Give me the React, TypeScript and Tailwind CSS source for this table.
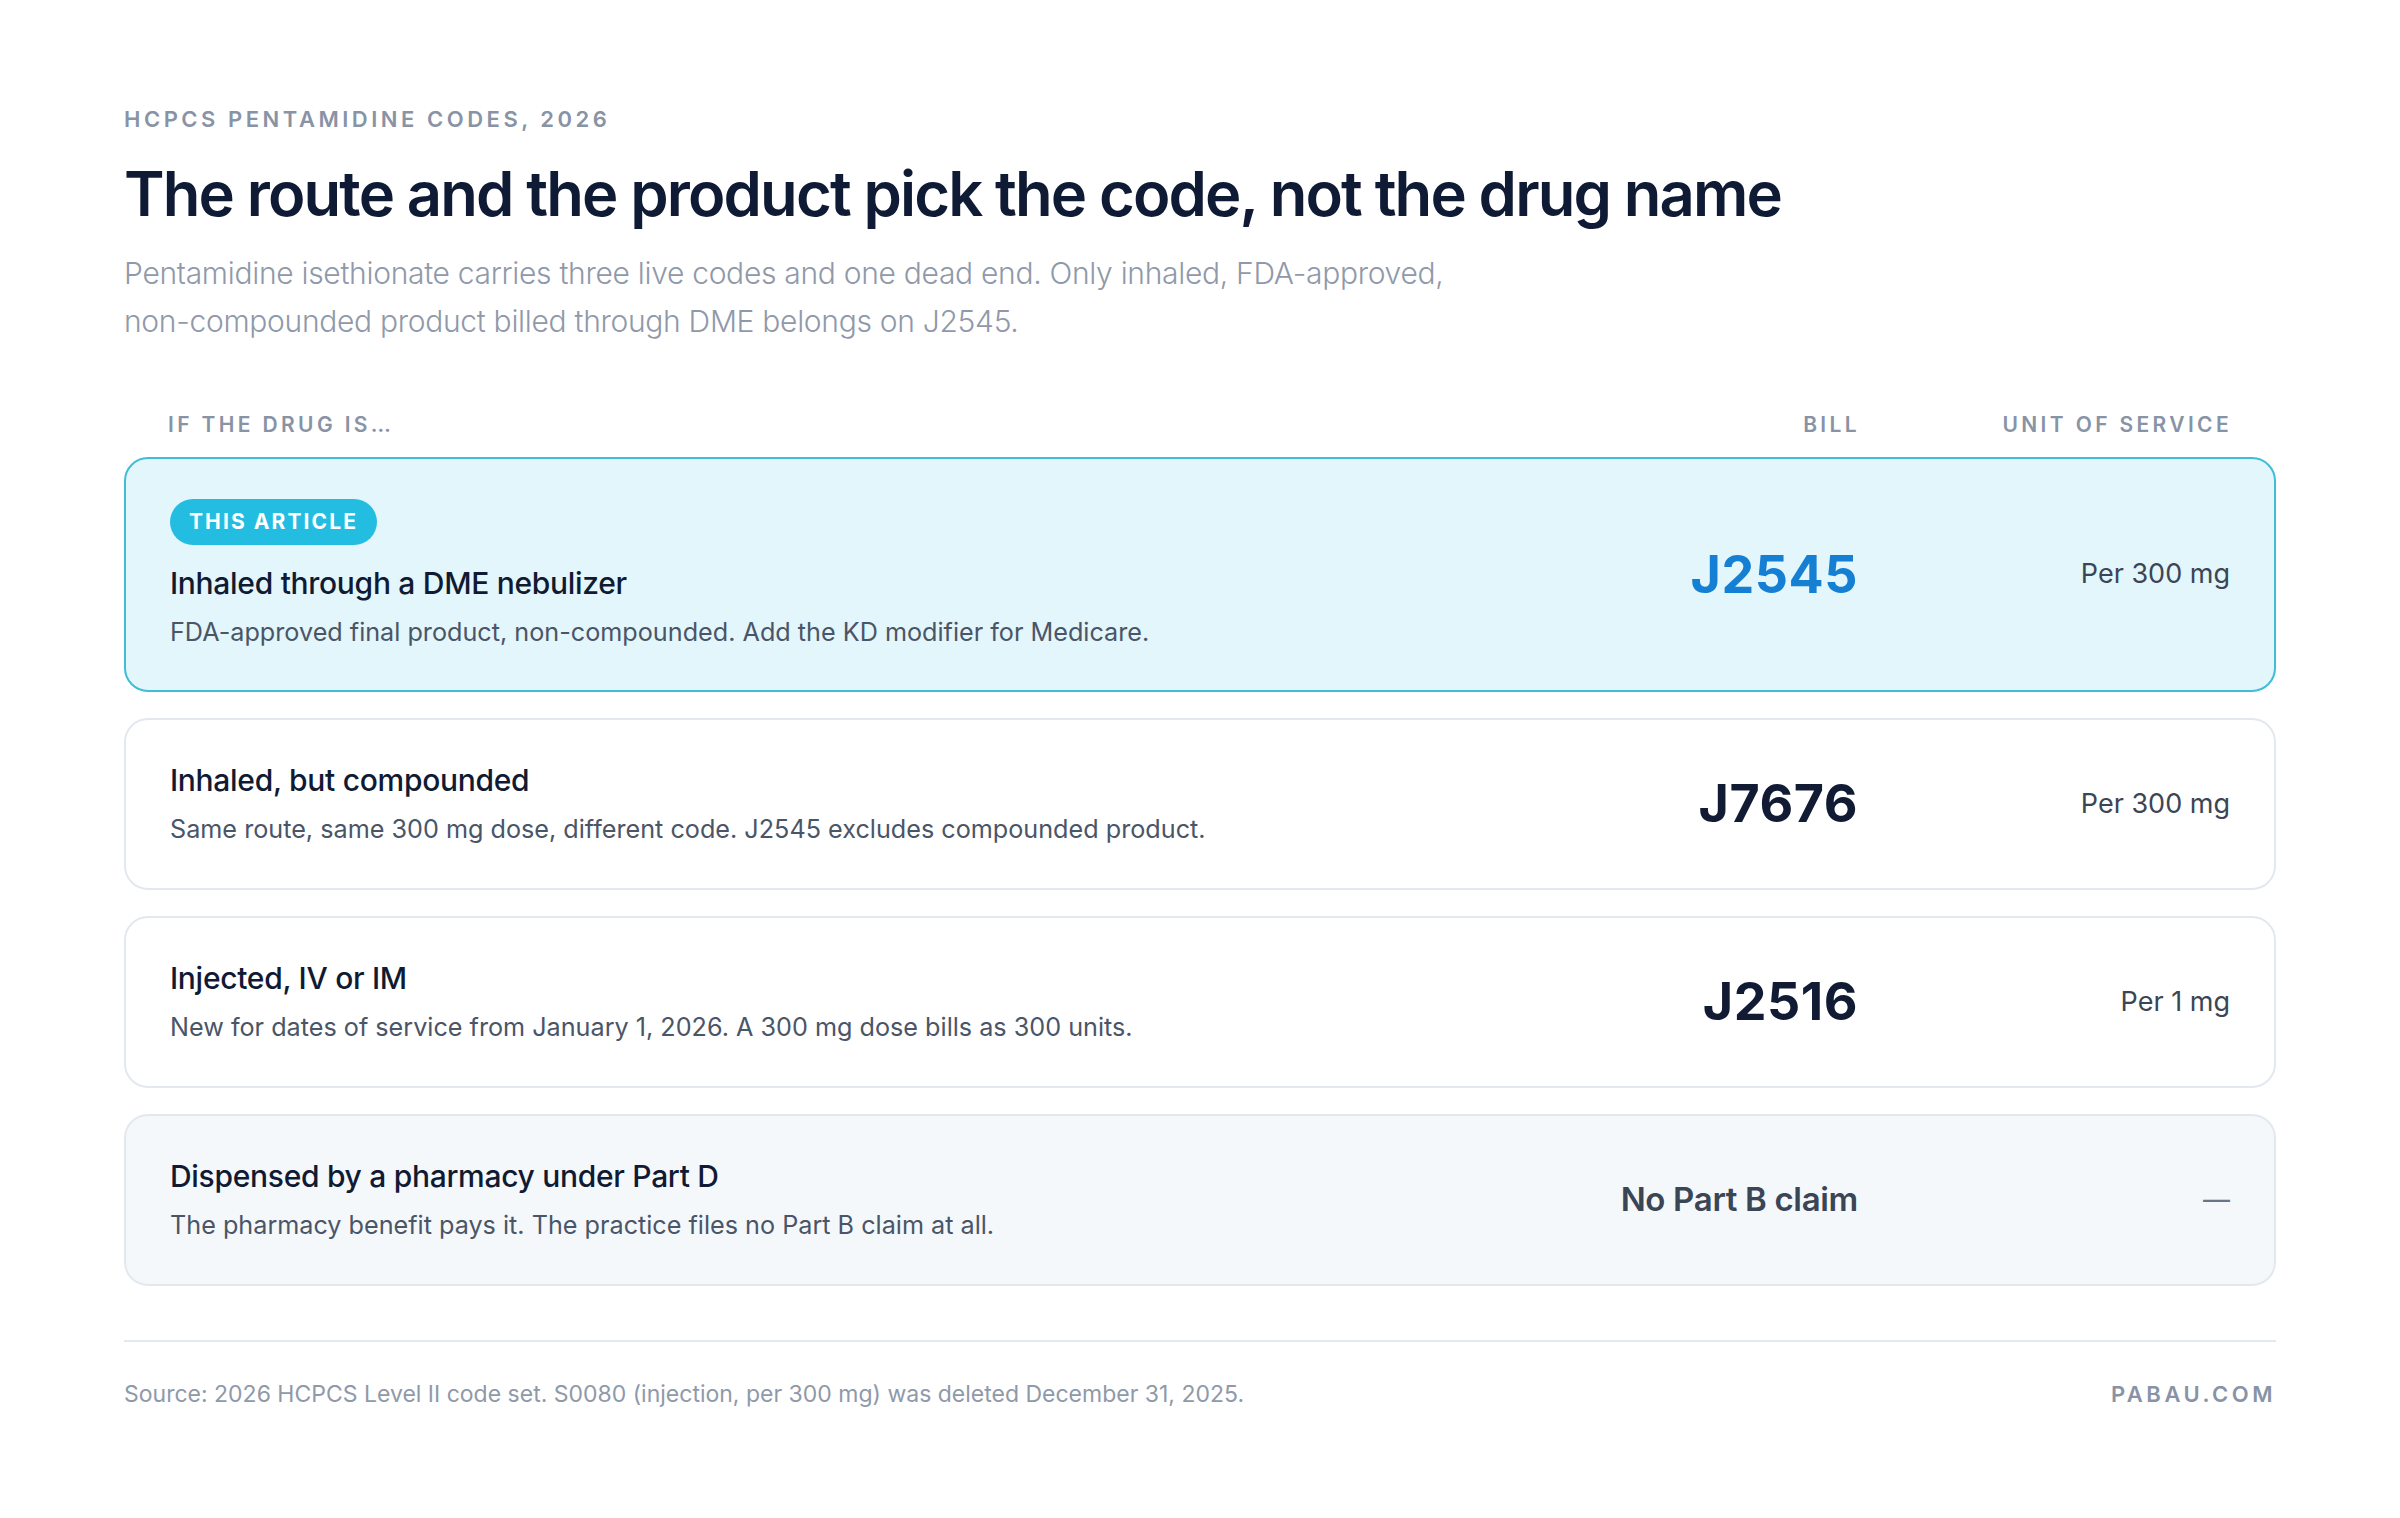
import React from 'react';

type Row = {
  title: string;
  desc: string;
  code: string;
  unit: string;
  variant: 'current' | 'plain' | 'muted';
};

const rows: Row[] = [
  {
    title: 'Inhaled through a DME nebulizer',
    desc: 'FDA-approved final product, non-compounded. Add the KD modifier for Medicare.',
    code: 'J2545',
    unit: 'Per 300 mg',
    variant: 'current',
  },
  {
    title: 'Inhaled, but compounded',
    desc: 'Same route, same 300 mg dose, different code. J2545 excludes compounded product.',
    code: 'J7676',
    unit: 'Per 300 mg',
    variant: 'plain',
  },
  {
    title: 'Injected, IV or IM',
    desc: 'New for dates of service from January 1, 2026. A 300 mg dose bills as 300 units.',
    code: 'J2516',
    unit: 'Per 1 mg',
    variant: 'plain',
  },
  {
    title: 'Dispensed by a pharmacy under Part D',
    desc: 'The pharmacy benefit pays it. The practice files no Part B claim at all.',
    code: 'No Part B claim',
    unit: '—',
    variant: 'muted',
  },
];

function CodeRow({ row }: { row: Row }) {
  const shell =
    row.variant === 'current'
      ? 'border-[#3dbdd8] bg-[#e3f6fb] py-[40px]'
      : row.variant === 'muted'
        ? 'border-[#e3e8ef] bg-[#f4f8fb] py-[41px]'
        : 'border-[#e3e8ef] bg-white py-[41px]';

  return (
    <div className={`grid grid-cols-[1fr_320px_372px] items-center rounded-[24px] border-2 px-[44px] ${shell}`}>
      <div>
        {row.variant === 'current' && (
          <span className="mb-[19px] inline-flex h-[46px] items-center rounded-full bg-[#24bde2] px-[19px] text-[21px] font-bold tracking-[0.1em] text-white">
            THIS ARTICLE
          </span>
        )}
        <div className="text-[30px] font-medium leading-[38px] tracking-[-0.01em] text-[#101a33]">{row.title}</div>
        <div className="mt-[12px] text-[25.2px] leading-[36px] text-[#4a5567]">{row.desc}</div>
      </div>
      <div
        className={
          row.variant === 'current'
            ? 'text-right text-[52px] font-bold tracking-[0.01em] text-[#1580d3]'
            : row.variant === 'muted'
              ? 'text-right text-[33px] font-semibold tracking-[-0.01em] text-[#3a4556]'
              : 'text-right text-[52px] font-bold tracking-[0.01em] text-[#111b33]'
        }
      >
        {row.code}
      </div>
      <div className={`text-right text-[27px] ${row.variant === 'muted' ? 'text-[#6b7585]' : 'text-[#3b4556]'}`}>
        {row.unit}
      </div>
    </div>
  );
}

export default function App() {
  return (
    <div className="min-h-screen bg-white px-[124px] pt-[104px] pb-[100px] font-['Inter','Liberation_Sans',sans-serif]">
      <div className="text-[22px] font-semibold leading-[30px] tracking-[0.16em] text-[#8893a5]">
        HCPCS PENTAMIDINE CODES, 2026
      </div>
      <h1 className="mt-[22px] text-[61.5px] font-semibold leading-[76px] tracking-[-0.03em] text-[#0f1a34]">
        The route and the product pick the code, not the drug name
      </h1>
      <p className="mt-[17px] text-[30px] font-light leading-[48px] tracking-[-0.01em] text-[#8f99a9]">
        Pentamidine isethionate carries three live codes and one dead end. Only inhaled, FDA-approved,
        <br />
        non-compounded product billed through DME belongs on J2545.
      </p>

      <div className="mt-[65px] grid grid-cols-[1fr_320px_372px] px-[44px] text-[21px] font-semibold leading-[30px] tracking-[0.16em] text-[#8893a5]">
        <div>IF THE DRUG IS…</div>
        <div className="text-right">BILL</div>
        <div className="text-right">UNIT OF SERVICE</div>
      </div>

      <div className="mt-[17px] flex flex-col gap-[26px]">
        {rows.map((row) => (
          <CodeRow key={row.code} row={row} />
        ))}
      </div>

      <div className="mt-[54px] h-[2px] bg-[#e3e8ef]" />

      <div className="mt-[35px] flex items-center justify-between">
        <div className="text-[23px] text-[#8f99a9]">
          Source: 2026 HCPCS Level II code set. S0080 (injection, per 300 mg) was deleted December 31, 2025.
        </div>
        <div className="text-[22px] font-semibold tracking-[0.16em] text-[#8893a5]">PABAU.COM</div>
      </div>
    </div>
  );
}
